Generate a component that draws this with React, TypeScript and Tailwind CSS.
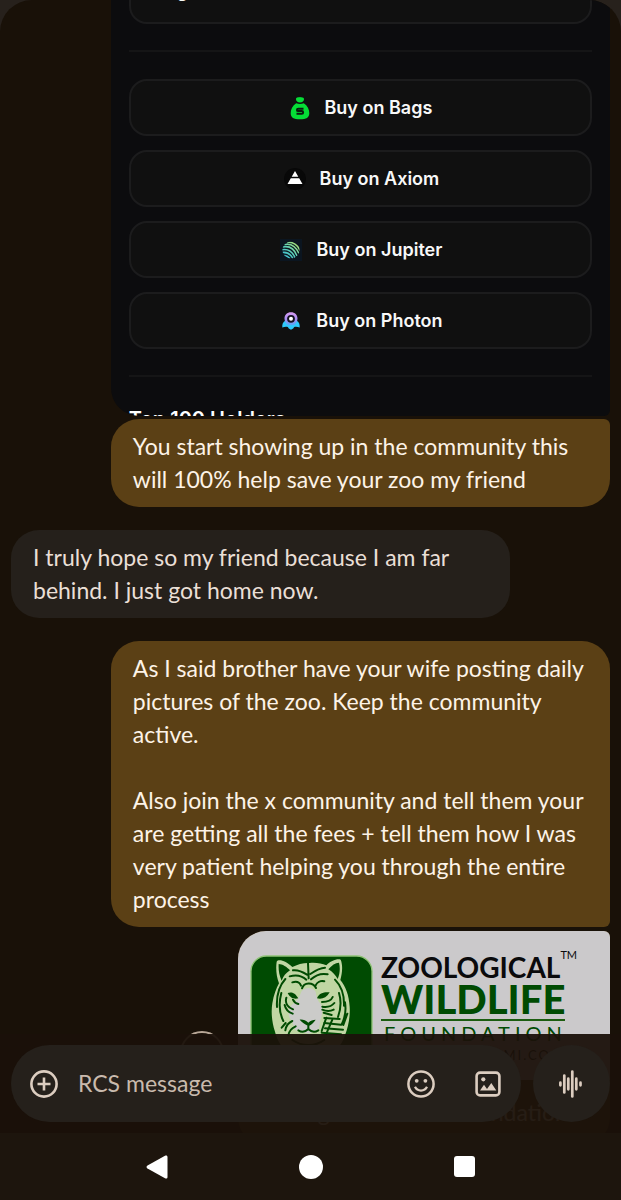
import type { ReactNode } from "react";

const bubble = "whitespace-pre-line px-[22px] py-[11px] text-[23px] leading-[33px]";
const sent = "bg-[#5b4015] text-[#fdf3e7]";

function BagsIcon() {
  return (
    <svg viewBox="0 0 20 24" className="h-6 w-5" aria-hidden="true">
      <path d="M6 3.200C6 .8 8 1.600 10 .9c2 .7 4-.1 4 2.300 0 2-1.500 3.200-4 3.200S6 5.200 6 3.200Z" fill="#05dd36" />
      <path d="M6.200 7.200c2.400 1 5.200 1 7.600 0C17.500 9.500 19.400 13.500 19.300 17.200 19.200 21.500 16.500 23.300 10 23.300S.8 21.500.7 17.200C.6 13.500 2.500 9.500 6.200 7.200Z" fill="#05dd36" />
      <path d="M13.500 12.700H8.300c-1.800 0-1.800 2.400 0 2.400h3.500c1.800 0 1.800 2.600 0 2.600H6.500" fill="none" stroke="#0b1a0e" strokeWidth="2" />
    </svg>
  );
}

function AxiomIcon() {
  return (
    <svg viewBox="0 0 22 22" className="h-[22px] w-[22px]" aria-hidden="true">
      <circle cx="11" cy="11" r="11" fill="#080808" />
      <path d="M11 3 14.300 8.800H7.700ZM6.800 10.200h8.400l3.300 5.800h-15Z" fill="#fff" />
    </svg>
  );
}

function JupiterIcon() {
  return (
    <svg viewBox="0 0 22 22" className="h-[22px] w-[22px]" aria-hidden="true">
      <defs>
        <linearGradient id="jup" x1="0" y1="1" x2="1" y2="0">
          <stop offset="0" stopColor="#2fb8e0" />
          <stop offset=".5" stopColor="#5fd0b5" />
          <stop offset="1" stopColor="#c5e860" />
        </linearGradient>
        <clipPath id="jupDisc"><circle cx="11" cy="11" r="8.600" /></clipPath>
      </defs>
      <path d="M0 0h22v22H0Z" fill="#0b1520" />
      <g clipPath="url(#jupDisc)" fill="none" stroke="url(#jup)" strokeWidth="1.500">
        <path d="M7 3.500c6-1 11 2.500 13 8M4 5.500c7-1.500 12 2 15 9M2.500 8c7-1.500 12 2 14.500 9M2 10.700c6-1 10.500 2 13 8M2 13.500c5-.7 8.500 1.500 11 6M3 16.500c3-.3 5 .8 7 3" />
      </g>
    </svg>
  );
}

function PhotonIcon() {
  return (
    <svg viewBox="0 0 22 22" className="h-[22px] w-[22px]" aria-hidden="true">
      <defs>
        <linearGradient id="photon" x1="0" y1="0" x2="0" y2="1">
          <stop offset="0" stopColor="#d99cf0" />
          <stop offset=".55" stopColor="#a68bf2" />
          <stop offset="1" stopColor="#5aa5f5" />
        </linearGradient>
      </defs>
      <path d="M5.500 10.500C3 12 2 14 2.300 17.500c2-.8 4-1 5.500-.5l1 1.500 2.200 1.300 2.200-1.300 1-1.500c1.500-.5 3.500-.3 5.500.5.300-3.500-.7-5.500-3.200-7Z" fill="#2fc8fa" />
      <path d="M11 2.200c3.900 0 6.500 2.700 6.500 6.300 0 2.700-1.500 4.700-3.200 6.500H7.700C6 13.200 4.500 11.200 4.500 8.500c0-3.600 2.600-6.300 6.500-6.300Z" fill="url(#photon)" />
      <circle cx="11" cy="8.800" r="3.900" fill="#141020" />
      <circle cx="11" cy="8.800" r="2" fill="#fff" />
    </svg>
  );
}

function Tiger() {
  return (
    <svg viewBox="33 70 369 369" className="block w-[123px]" role="img" aria-label="Tiger">
      <rect x="36" y="73" width="363" height="363" rx="46" fill="#004b02" stroke="#8fc377" strokeWidth="4" />
      <path
        d="M113 90C118 80 142 88 160 106c15-8 35-13 52-12 20-2 36 2 50 7 12-13 33-21 43-17 7 16 5 40-1 61 16 20 26 45 28 80 2 30-4 60-14 86-12 40-55 80-103 81-52-1-94-40-107-92-10-30-12-60-8-85 4-25 12-45 20-60-8-20-10-45-7-65Z"
        fill="#c0d6a3"
      />
      <path d="M188 178c12-12 32-12 42 2 2 16 6 28 16 38 6 16 4 34-2 46l-4 28-30 14-40-10-12-28c-12-14-12-32-2-46 16-12 26-26 32-44Z" fill="#cbcbc9" />
      <path
        d="M119 97c11 0 25 9 34 19-13 8-20 18-25 31-8-17-10-34-9-50ZM300 93c-11 0-22 8-32 20 13 8 22 18 28 29 7-16 8-34 4-49ZM146 184c10-4 22-2 32 16-12 3-24 0-32-16ZM272 182c-12-2-32 0-38 18 14 3 28 0 38-18ZM182 264c10-1 18 2 26 9 7-7 14-9 22-9-6 9-12 15-21 19-9-4-20-10-27-19Z"
        fill="#004b02"
      />
      <g fill="none" stroke="#004b02" strokeWidth="6" strokeLinecap="round">
        <path d="M207 95l2 45M162 116c14-2 28 4 42 13M258 108c-16 0-30 9-44 19M152 134c20-6 38-1 50 10M266 128c-18-4-36 2-50 15" />
        <path d="M189 170c6-18 32-20 42-1M160 152c12-4 22 0 26 10M256 149c-12-3-22 3-26 12" />
        <path d="M139 142c-18 20-27 50-25 84M127 184c-8 30-5 62 6 84M142 198c-5 18 6 30 20 35M137 220c3 14 12 22 24 26M162 204c3 7 8 11 16 13" />
        <path d="M288 144c18 18 28 46 27 78M300 184c8 26 5 50-3 72M281 196c-4 10-18 15-32 15M286 214c-8 10-22 13-36 11M284 234c-10 5-22 5-34 0M278 250l-24-7M318 212c4 24 0 46-10 66M325 246l-12 34" />
        <path d="M302 262l-46-3M306 279l-50-5M312 294l-54-4M306 308l-58-5" />
        <path d="M208 282v10c-8 8-20 10-30 4M208 292c8 8 20 10 30 4M160 268c-12 5-19 15-21 28M170 284c-12 5-20 15-22 27M140 274l-12 14M262 258l-14 40M280 264l-18 42" />
        <path d="M160 325c30 20 68 20 96 0M150 350c38 24 84 22 116-2" />
      </g>
    </svg>
  );
}

function PlusCircle() {
  return (
    <svg viewBox="0 0 28 28" className="h-7 w-7" fill="none" stroke="#dccdc0" strokeWidth="2.600" aria-hidden="true">
      <circle cx="14" cy="14" r="12.600" />
      <path d="M14 7.500v13M7.500 14h13" />
    </svg>
  );
}

function Smiley() {
  return (
    <svg viewBox="0 0 28 28" className="h-7 w-7" fill="none" stroke="#dccdc0" strokeWidth="2.500" aria-hidden="true">
      <circle cx="14" cy="14" r="12.600" />
      <path d="M8 16.800c2.300 5 9.700 5 12 0" strokeWidth="2.200" />
      <circle cx="9.700" cy="10.800" r="1.900" fill="#dccdc0" stroke="none" />
      <circle cx="18.400" cy="10.800" r="1.900" fill="#dccdc0" stroke="none" />
    </svg>
  );
}

function Gallery() {
  return (
    <svg viewBox="0 0 26 26" className="h-[26px] w-[26px]" fill="none" aria-hidden="true">
      <rect x="1.600" y="1.600" width="22.800" height="22.800" rx="3.500" stroke="#dccdc0" strokeWidth="2.600" />
      <circle cx="8.300" cy="8.300" r="2.100" fill="#dccdc0" />
      <path d="m5 19.500 4-5.700 3 4.200 4.300-5.900 5 7.400Z" fill="#dccdc0" />
    </svg>
  );
}

function VoiceWave() {
  return (
    <svg viewBox="2 0 26 28" className="h-7 w-[26px]" stroke="#dccdc0" strokeWidth="2.700" strokeLinecap="round" aria-hidden="true">
      <path d="M3.400 12.700v2.600M7.300 5.500v17M11.300 8.700v10.600M15.300 1.500v25M19.300 8.700v10.600M23.500 12.700v2.600" />
    </svg>
  );
}

const LINKS: { label: string; icon: ReactNode }[] = [
  { label: "Buy on Bags", icon: <BagsIcon /> },
  { label: "Buy on Axiom", icon: <AxiomIcon /> },
  { label: "Buy on Jupiter", icon: <JupiterIcon /> },
  { label: "Buy on Photon", icon: <PhotonIcon /> },
];

function TokenCard() {
  const btn = "flex h-[57px] w-full shrink-0 items-center rounded-[18px] border-2 border-[#1c1c1d] bg-[#101010] text-[18px] font-semibold text-[#f8f8f8]";
  return (
    <div className="flex h-[416px] w-5/6 flex-col self-end overflow-hidden rounded-bl-[28px] rounded-br-md bg-[#0c0c0e] px-[18px] font-['Inter',sans-serif]">
      {/* scrolled almost out of view */}
      <button className={`${btn} -mt-[33px] pb-2.5 pl-[46px]`}>g</button>
      <hr className="mt-[26px] shrink-0 border-t-2 border-[#151516]" />
      <div className="mt-[27px] flex flex-col gap-[14px]">
        {LINKS.map(l => (
          <button key={l.label} className={`${btn} justify-center gap-[14px] pl-0.5`}>
            {l.icon}
            <span>{l.label}</span>
          </button>
        ))}
      </div>
      <hr className="mt-[26px] shrink-0 border-t-2 border-[#151516]" />
      <h2 className="mt-[27px] shrink-0 text-[20px] leading-[30px] font-semibold text-white">Top 100 Holders</h2>
    </div>
  );
}

function LinkPreview() {
  return (
    <div className="mt-1 flex items-start gap-[14px] self-end">
      <button aria-label="Share" className="mt-[100px] h-11 w-11 rounded-full border-2 border-[#b8a797]" />
      <a href="#preview" className={`block w-[372px] overflow-hidden rounded-tl-[28px] rounded-tr-md rounded-b-[28px] ${sent}`}>
        <div className="flex h-[149px] gap-2 overflow-hidden bg-[#cbc9cb] pt-[22px] pl-3">
          <Tiger />
          <div className="w-[184px] text-[#004b02]">
            <div className="flex items-start text-[28px] leading-7 font-bold whitespace-nowrap text-[#0a0a0c]">
              ZOOLOGICAL
              <sup className="top-0 -mt-1 text-[11px] leading-3 font-normal">TM</sup>
            </div>
            <div className="text-[40px] leading-9 font-black">WILDLIFE</div>
            <div className="mt-[2px] border-t-2 border-[#1c5d10]" />
            <div className="pl-[3px] text-[20px] leading-6 tracking-[5px]">FOUNDATION</div>
            <div className="text-right text-[13px] leading-5 tracking-[2px] text-[#0a0a0c]">WWW.ZWFMIAMI.COM</div>
          </div>
        </div>
        <div className="px-[22px] py-4 text-[23px] leading-[33px] whitespace-nowrap">Zoological Wildlife Foundation</div>
      </a>
    </div>
  );
}

function Composer() {
  return (
    <form className="absolute inset-x-0 bottom-0 flex gap-3 bg-[#1a1109]/95 p-[11px]" onSubmit={e => e.preventDefault()}>
      <div className="flex h-[77px] min-w-0 flex-1 items-center rounded-full bg-[#25201b] pr-5 pl-[19px]">
        <button type="button" aria-label="Attach"><PlusCircle /></button>
        <input
          aria-label="Message"
          placeholder="RCS message"
          className="ml-5 min-w-0 flex-1 bg-transparent text-[23px] text-[#dccdc0] outline-none placeholder:text-[#c9baad]"
        />
        <button type="button" aria-label="Emoji" className="mr-10"><Smiley /></button>
        <button type="button" aria-label="Gallery"><Gallery /></button>
      </div>
      <button type="button" aria-label="Voice message" className="flex h-[77px] w-[77px] shrink-0 items-center justify-center rounded-full bg-[#25201b]">
        <VoiceWave />
      </button>
    </form>
  );
}

function NavBar() {
  return (
    <nav className="flex h-[67px] shrink-0 items-center bg-[#1d150d] px-20">
      <button aria-label="Back" className="flex flex-1 justify-center">
        <svg viewBox="0 0 24 24" className="h-6 w-6" fill="#fff">
          <path d="M20 .800c1.300-.7 2.500-.2 2.500 1.300v19.800c0 1.500-1.200 2-2.500 1.300L2.500 13.500c-1.300-.8-1.300-2.200 0-3Z" />
        </svg>
      </button>
      <button aria-label="Home" className="flex flex-1 justify-center"><span className="h-6 w-6 rounded-full bg-white" /></button>
      <button aria-label="Recents" className="flex flex-1 justify-center"><span className="h-[21px] w-[21px] rounded-[3px] bg-white" /></button>
    </nav>
  );
}

export default function App() {
  return (
    <div className="flex h-screen flex-col overflow-hidden bg-[#27211c] font-['Lato',sans-serif]">
      <main className="relative min-h-0 flex-1 overflow-hidden rounded-t-[32px] bg-[#191108]">
        <div className="flex h-full flex-col overflow-hidden px-[11px] *:shrink-0">
          <TokenCard />
          <p className={`${bubble} ${sent} mt-[3px] w-5/6 self-end rounded-[28px] rounded-tr-md`}>
            {"You start showing up in the community this\nwill 100% help save your zoo my friend"}
          </p>
          <p className={`${bubble} mt-[23px] w-5/6 rounded-[28px] bg-[#25201b] text-[#eadfd6]`}>
            {"I truly hope so my friend because I am far\nbehind. I just got home now."}
          </p>
          <p className={`${bubble} ${sent} mt-[23px] w-5/6 self-end rounded-[28px] rounded-br-md`}>
            {"As I said brother have your wife posting daily\npictures of the zoo. Keep the community\nactive.\n\nAlso join the x community and tell them your\nare getting all the fees + tell them how I was\nvery patient helping you through the entire\nprocess"}
          </p>
          <LinkPreview />
        </div>
        <Composer />
      </main>
      <NavBar />
    </div>
  );
}
